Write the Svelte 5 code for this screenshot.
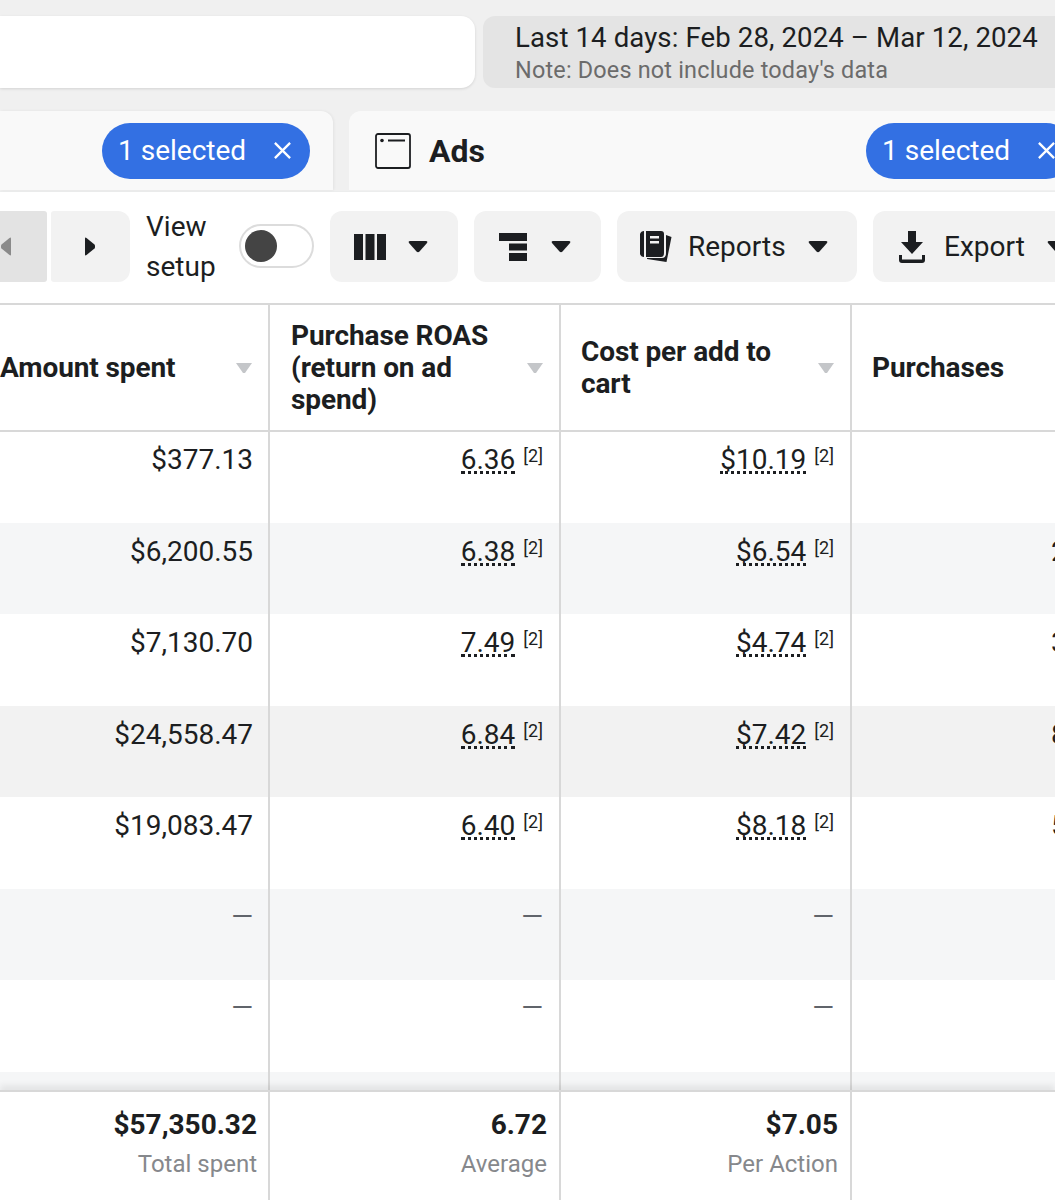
<script>
  const rows = [
    { spent: '$377.13', roas: '6.36', cost: '$10.19' },
    { spent: '$6,200.55', roas: '6.38', cost: '$6.54', tail: '2' },
    { spent: '$7,130.70', roas: '7.49', cost: '$4.74', tail: '3' },
    { spent: '$24,558.47', roas: '6.84', cost: '$7.42', tail: '8', tone: 'grey' },
    { spent: '$19,083.47', roas: '6.40', cost: '$8.18', tail: '5' },
    { spent: '—', roas: '—', cost: '—' },
    { spent: '—', roas: '—', cost: '—' },
    { spent: '', roas: '', cost: '' }
  ];
</script>

<div class="page">
  <div class="top">
    <div class="search"></div>
    <div class="date">
      <div class="date-main">Last 14 days: Feb 28, 2024 – Mar 12, 2024</div>
      <div class="date-note">Note: Does not include today's data</div>
    </div>
  </div>

  <div class="tabs">
    <div class="tab tab-left">
      <div class="pill"><span>1 selected</span>
        <svg class="x" viewBox="0 0 20 20"><path d="M2 2 18 18M18 2 2 18" /></svg>
      </div>
    </div>
    <div class="tab tab-right">
      <svg class="ad-icon" viewBox="0 0 36 36"><rect x="1" y="1" width="34" height="34" rx="2" /><circle cx="7" cy="7.500" r="1.800" class="solid" /><path d="M13 7.500H30" /></svg>
      <span class="ads">Ads</span>
      <div class="pill pill-right"><span>1 selected</span>
        <svg class="x" viewBox="0 0 20 20"><path d="M2 2 18 18M18 2 2 18" /></svg>
      </div>
    </div>
  </div>

  <div class="toolbar">
    <div class="btn prev"><svg class="tri-h" viewBox="0 0 12 19"><path d="M11 1.500V17.500Q11 19 9.500 18L1.500 11.500Q1 11 1 10V9Q1 8 1.500 7.500L9.500 1Q11 0 11 1.500Z" fill="#8a8a8a" /></svg></div>
    <div class="btn next"><svg class="tri-h" viewBox="0 0 12 19"><path d="M1 1.500V17.500Q1 19 2.500 18L10.500 11.500Q11 11 11 10V9Q11 8 10.500 7.500L2.500 1Q1 0 1 1.500Z" fill="#1c1e21" /></svg></div>
    <div class="view">View<br />setup</div>
    <div class="toggle"><div class="knob"></div></div>
    <div class="btn b-cols">
      <svg class="i-cols" viewBox="0 0 32 26"><path d="M0 0H9V26H0ZM11.500 0H20.500V26H11.500ZM23 0H32V26H23Z" /></svg>
      <svg class="caret" viewBox="0 0 20 12"><path d="M2 0H18Q20 0 19 2L11.500 10.500Q10 12 8.500 10.500L1 2Q0 0 2 0Z" /></svg>
    </div>
    <div class="btn b-break">
      <svg class="i-break" viewBox="0 0 28 28"><path d="M0 0H28V8H0ZM10 10.500H28V17.500H10ZM10 20H28V28H10Z" /></svg>
      <svg class="caret" viewBox="0 0 20 12"><path d="M2 0H18Q20 0 19 2L11.500 10.500Q10 12 8.500 10.500L1 2Q0 0 2 0Z" /></svg>
    </div>
    <div class="btn b-reports">
      <svg class="i-rep" viewBox="0 0 32 32">
        <path d="M4 0V26Q1 26 0 23V3Q1 0 4 0ZM6 0H21Q24 0 24 3V22Q24 26 21 26H6ZM10 5V7.500H19V5ZM10 10V12.500H19V10Z" fill-rule="evenodd" />
        <path d="M26 4 31.500 6 26.500 31 7 28V27H22Q26 27 26 22Z" />
      </svg>
      <span>Reports</span>
      <svg class="caret" viewBox="0 0 20 12"><path d="M2 0H18Q20 0 19 2L11.500 10.500Q10 12 8.500 10.500L1 2Q0 0 2 0Z" /></svg>
    </div>
    <div class="btn b-export">
      <svg class="i-exp" viewBox="0 0 26 32"><path d="M9 0H17V11H24L13 23 2 11H9ZM0 24H3V28.500H23V24H26V29Q26 32 23 32H3Q0 32 0 29Z" /></svg>
      <span>Export</span>
      <svg class="caret" viewBox="0 0 20 12"><path d="M2 0H18Q20 0 19 2L11.500 10.500Q10 12 8.500 10.500L1 2Q0 0 2 0Z" /></svg>
    </div>
  </div>

  <div class="table">
    <div class="thead">
      <div class="th c1"><span class="hl first">Amount spent</span><i class="sort"></i></div>
      <div class="th c2"><span class="hl">Purchase ROAS (return on ad spend)</span><i class="sort"></i></div>
      <div class="th c3"><span class="hl">Cost per add to cart</span><i class="sort"></i></div>
      <div class="th c4"><span class="hl">Purchases</span></div>
    </div>
    {#each rows as r, i}
      <div class="tr" class:alt={i % 2 === 1} class:grey={r.tone === 'grey'} class:last={i === 7} class:head={i === 0}>
        <div class="td c1">{#if r.spent === '—'}<span class="dash">—</span>{:else}{r.spent}{/if}</div>
        <div class="td c2">
          {#if r.roas === '—'}<span class="dash">—</span>{:else if r.roas}<span class="dotted">{r.roas}</span><sup>[2]</sup>{/if}
        </div>
        <div class="td c3">
          {#if r.cost === '—'}<span class="dash">—</span>{:else if r.cost}<span class="dotted">{r.cost}</span><sup>[2]</sup>{/if}
        </div>
        <div class="td c4 tail">{r.tail ?? ''}</div>
      </div>
    {/each}
    <div class="tfoot">
      <div class="tf c1"><b>$57,350.32</b><small>Total spent</small></div>
      <div class="tf c2"><b>6.72</b><small>Average</small></div>
      <div class="tf c3"><b>$7.05</b><small>Per Action</small></div>
      <div class="tf c4"></div>
    </div>
  </div>
</div>

<style>
  :global(body) { margin: 0; background: #fff; }
  .page {
    width: 1055px;
    height: 1200px;
    overflow: hidden;
    font-family: Roboto, "Liberation Sans", sans-serif;
    color: #1c1e21;
    background: #fff;
  }
  .top {
    height: 111px;
    box-sizing: border-box;
    padding-top: 16px;
    background: #f0f0f0;
    display: flex;
    gap: 8px;
  }
  .search {
    width: 475px;
    height: 72px;
    background: #fff;
    border-radius: 0 14px 14px 0;
    box-shadow: 0 1px 3px rgba(0, 0, 0, 0.12);
  }
  .date {
    flex: 1;
    height: 72px;
    background: #e4e4e4;
    border-radius: 12px 0 0 12px;
    padding-left: 32px;
  }
  .date-main { font-size: 27.600px; line-height: 32px; margin-top: 6px; white-space: nowrap; letter-spacing: 0.1px; }
  .date-note { font-size: 23.400px; line-height: 30px; color: #6b6b6b; margin-top: 1px; white-space: nowrap; letter-spacing: 0.2px; }

  .tabs {
    height: 80px;
    background: #f0f0f0;
    display: flex;
    gap: 16px;
  }
  .tab {
    height: 79px;
    background: #f9f9f9;
    display: flex;
    align-items: center;
    box-sizing: border-box;
    overflow: hidden;
  }
  .tab-left {
    width: 333px;
    flex: none;
    border-radius: 0 12px 0 0;
    justify-content: flex-end;
    padding-right: 23px;
    box-shadow: 1px 0 3px rgba(0, 0, 0, 0.06);
  }
  .tab-right {
    flex: 1;
    min-width: 0;
    border-radius: 12px 0 0 0;
    padding-left: 26px;
  }
  .pill {
    height: 56px;
    width: 208px;
    flex: none;
    box-sizing: border-box;
    padding-left: 16px;
    background: #3370e3;
    border-radius: 28px;
    color: #fff;
    font-size: 28px;
    display: flex;
    align-items: center;
  }
  .pill-right { margin-left: auto; margin-right: -188px; position: relative; left: -169px; }
  .x { width: 19px; height: 19px; margin-left: 27px; flex: none; }
  .x path { stroke: #fff; stroke-width: 2.400; fill: none; }
  .ad-icon { width: 36px; height: 36px; flex: none; }
  .ad-icon rect, .ad-icon path { fill: none; stroke: #1c1e21; stroke-width: 1.800; }
  .ad-icon .solid { fill: #1c1e21; }
  .ads { font-weight: 700; font-size: 32px; margin-left: 18px; line-height: 38px; }

  .toolbar {
    height: 112px;
    box-sizing: border-box;
    padding-top: 19px;
    border-top: 1px solid #eceded;
    display: flex;
    align-items: flex-start;
    background: #fff;
    margin-left: -38px;
    width: 1200px;
  }
  .btn {
    height: 71px;
    background: #f2f2f2;
    border-radius: 12px;
    display: flex;
    align-items: center;
    flex: none;
    box-sizing: border-box;
    font-size: 28px;
  }
  .prev { width: 85px; background: #e3e3e3; justify-content: flex-end; padding-right: 35px; margin-right: 4px; border-radius: 0 3px 3px 0; }
  .next { width: 79px; border-radius: 3px 12px 12px 3px; justify-content: center; margin-right: 16px; padding-right: 2px; }
  .tri-h { width: 12px; height: 19px; }
  .view { width: 93px; font-size: 28px; line-height: 40px; flex: none; margin-top: -4px; }
  .toggle {
    width: 75px;
    height: 44px;
    box-sizing: border-box;
    border: 2px solid #dcdcdc;
    border-radius: 22px;
    margin: 13px 16px 0 0;
    padding: 4px 0 0 4px;
    background: #fff;
    flex: none;
  }
  .knob { width: 32px; height: 32px; background: #444; border-radius: 50%; }
  .b-cols { width: 128px; padding-left: 24px; margin-right: 16px; }
  .b-break { width: 127px; padding-left: 25px; margin-right: 16px; }
  .b-reports { width: 240px; padding-left: 23px; margin-right: 16px; }
  .b-export { width: 240px; padding-left: 26px; }
  .btn svg { fill: #1c1e21; flex: none; }
  .i-cols { width: 32px; height: 26px; }
  .i-break { width: 28px; height: 28px; }
  .i-rep { width: 32px; height: 32px; margin-right: 16px; }
  .i-exp { width: 26px; height: 32px; margin-right: 19px; }
  .caret { width: 20px; height: 12px; }
  .b-cols .caret { margin-left: 22px; }
  .b-break .caret { margin-left: 24px; }
  .b-reports .caret, .b-export .caret { margin-left: 22px; }

  .table { border-top: 2px solid #d8d8d8; }
  .thead, .tr, .tfoot {
    display: grid;
    grid-template-columns: 270px 291px 291px 203px;
    overflow: hidden;
  }
  .thead { height: 125px; border-bottom: 2px solid #d8d8d8; }
  .th {
    display: flex;
    align-items: center;
    padding: 1px 16px 0 21px;
    box-sizing: border-box;
    border-right: 2px solid #d8d8d8;
    font-weight: 700;
    font-size: 28px;
    line-height: 32px;
    position: relative;
  }
  .th.c3, .th.c4 { padding-left: 20px; }
  .hl { flex: 1; letter-spacing: -0.1px; }
  .hl.first { margin-left: -21px; }
  .th.c1 { padding-right: 17px; }
  .th.c1 .sort { position: relative; left: 1px; }
  .c4 { border-right: 0 !important; }
  .sort {
    width: 16px;
    height: 10px;
    background: #c4c6c9;
    clip-path: polygon(0 0, 100% 0, 56% 100%, 44% 100%);
    flex: none;
    margin-left: 8px;
  }
  .tr { height: 91.500px; }
  .tr.head { height: 90.500px; }
  .tr.alt { background: #f5f6f7; }
  .tr.grey { background: #f2f2f2; }
  .tr.last { height: 18px; }
  .tr.last .td { padding: 0; }
  .td {
    box-sizing: border-box;
    border-right: 2px solid #d8d8d8;
    font-size: 28px;
    line-height: 32px;
    padding: 13px 16px 0 0;
    text-align: right;
    white-space: nowrap;
  }
  .tr.head .td { padding-top: 12px; }
  .td.c1 { padding-right: 15px; }
  .tail { text-align: left; padding-left: 199px; }
  .dotted {
    display: inline-block;
    line-height: 23px;
    border-bottom: 3px dotted #1c1e21;
    margin-right: 8px;
  }
  sup { font-size: 18px; line-height: 0; vertical-align: 7px; }
  .dash { color: #60646b; position: relative; top: -1px; }
  .tfoot {
    height: 109px;
    border-top: 2px solid #d8d8d8;
    box-shadow: 0 -5px 6px rgba(0, 0, 0, 0.07);
    position: relative;
    background: #fff;
    overflow: visible;
  }
  .tf {
    box-sizing: border-box;
    border-right: 2px solid #d8d8d8;
    padding: 16px 12px 0 0;
    text-align: right;
  }
  .tf.c1 { padding-right: 11px; }
  .tf b { display: block; font-size: 28px; line-height: 34px; font-weight: 700; }
  .tf small { display: block; font-size: 24px; line-height: 32px; color: #86888c; margin-top: 6px; }
</style>
